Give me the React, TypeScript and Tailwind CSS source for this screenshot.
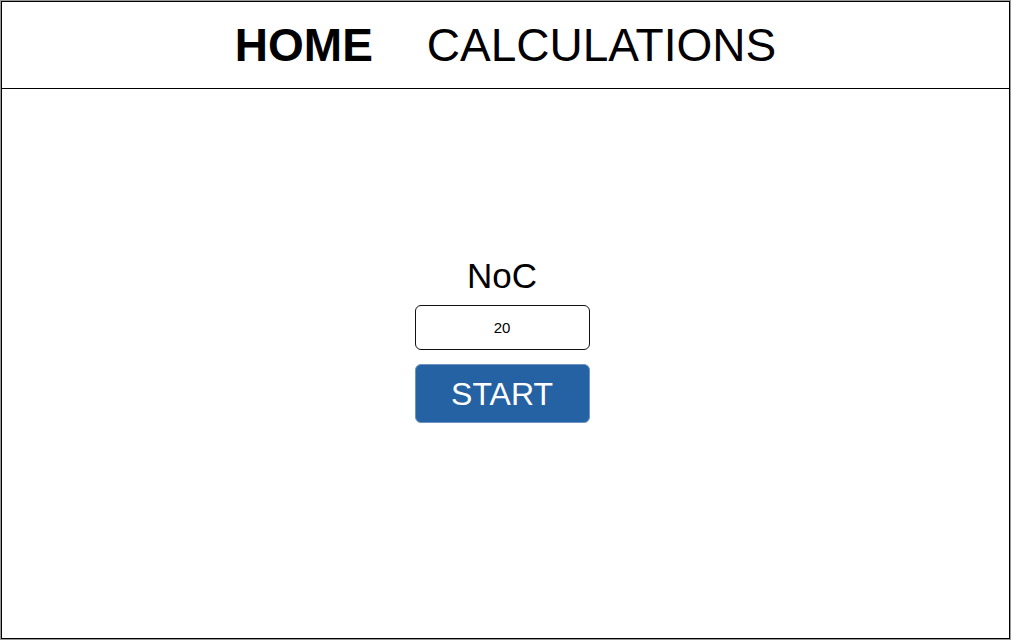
import { useState } from "react"

const App = () => {
	const [noc, setNoc] = useState("20")

	return (
		<div
			className="w-[1011px] h-[640px] bg-white border border-[#9a9a9a]"
			style={{ fontFamily: '"Liberation Sans", Arial, sans-serif' }}
		>
			<div className="h-full flex flex-col border border-black">
				<header className="h-[87px] flex items-center justify-center gap-[54px] border-b border-black text-black">
					<span className="text-[46px] font-bold leading-none">HOME</span>
					<span className="text-[46px] leading-none">CALCULATIONS</span>
				</header>
				<main className="flex-1 flex flex-col items-center pt-[167px] pr-[7px]">
					<p className="text-[35px] leading-[40px] text-black">NoC</p>
					<input
						value={noc}
						onChange={(e) => setNoc(e.target.value)}
						className="mt-[9px] w-[175px] h-[45px] rounded-md border border-[#111] text-center text-[15px] text-black outline-none"
					/>
					<button className="mt-[14px] w-[175px] h-[59px] rounded-md bg-[#2462a3] border border-[#6d93c6] text-white text-[32px] cursor-pointer">
						START
					</button>
				</main>
			</div>
		</div>
	)
}

export default App
